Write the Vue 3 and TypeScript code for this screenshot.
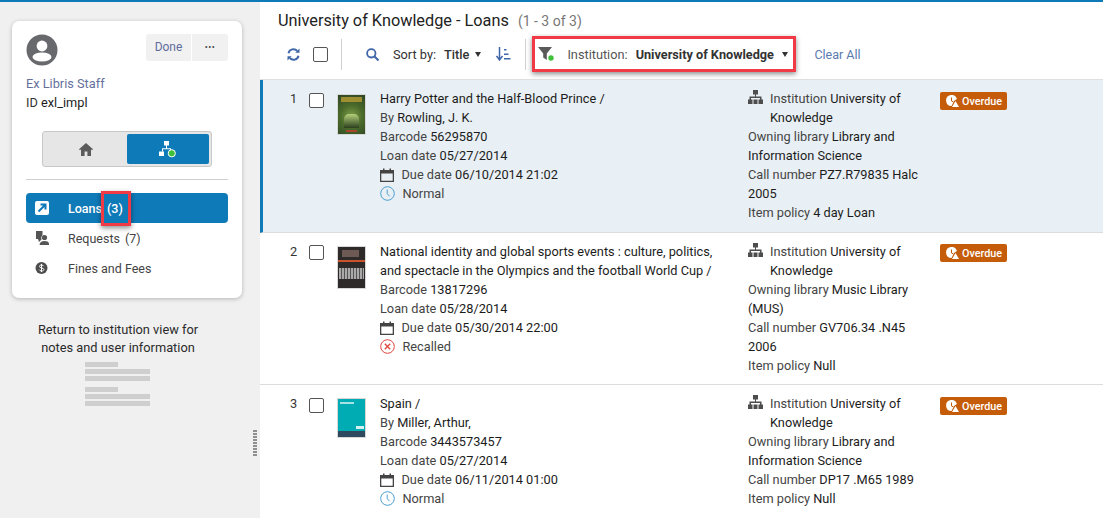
<template>
  <div class="page">
    <aside class="sidebar">
      <section class="card">
        <div class="card__top">
          <svg class="avatar" viewBox="0 0 32 32" aria-hidden="true">
            <circle cx="16" cy="16" r="15.5" fill="#68696d" />
            <circle cx="16" cy="12" r="5.4" fill="#fff" />
            <ellipse cx="16" cy="23" rx="9.5" ry="4.6" fill="#fff" />
          </svg>
          <div class="card__actions">
            <button class="btn btn--done">Done</button>
            <button class="btn btn--more">•••</button>
          </div>
        </div>
        <div class="user-name">Ex Libris Staff</div>
        <div class="user-id">ID <span class="value">exl_impl</span></div>

        <div class="toggle">
          <div class="toggle__item">
            <svg width="14" height="13" viewBox="0 0 14 13" aria-hidden="true">
              <path d="M7 0 0 6.2l1 1 1-.9V13h3.6V8.6h2.8V13H12V6.3l1 .9 1-1z" fill="#5b5b5b" />
            </svg>
          </div>
          <div class="toggle__item toggle__item--on">
            <svg width="18" height="17" viewBox="0 0 18 17" aria-hidden="true">
              <path d="M5 0h5v4.6H8v2.6h4v2h-1v-1H4v2H3V7.2h4V4.6H5zM0 10.500h5V15H0z" fill="#fff" />
              <circle cx="12.800" cy="12.300" r="3.600" fill="#3fbf3a" stroke="#fff" stroke-width="1" />
            </svg>
          </div>
        </div>

        <hr class="divider" />

        <nav class="nav">
          <div class="nav__item nav__item--on">
            <svg class="nav__icon" width="14" height="14" viewBox="0 0 14 14" aria-hidden="true">
              <rect width="14" height="14" rx="2" fill="#fff" />
              <path d="M3.500 10.500 9.500 4.500M5.500 3.500h5v5" fill="none" stroke="#0f7ab8" stroke-width="2" />
            </svg>
            <span>Loans</span>
            <span class="nav__count">(3)</span>
            <span class="mark mark--count"></span>
          </div>
          <div class="nav__item">
            <svg class="nav__icon" width="14" height="14" viewBox="0 0 14 14" aria-hidden="true">
              <path d="M1 0h6.500v4.200a3.600 3.600 0 0 0-1 4.300L4 11 3 8H1z" fill="#555" />
              <circle cx="9.500" cy="6.500" r="2.600" fill="#555" />
              <path d="M4.500 14c.2-2.800 2-4 5-4s4.600 1.200 4.800 4z" fill="#555" />
            </svg>
            <span>Requests</span>
            <span class="nav__count">(7)</span>
          </div>
          <div class="nav__item">
            <svg class="nav__icon" width="14" height="14" viewBox="0 0 14 14" aria-hidden="true">
              <circle cx="6.500" cy="7" r="6" fill="#4d4d4d" />
              <path d="M8.700 5.200C8.300 4.400 7.500 4 6.500 4c-1.200 0-2 .6-2 1.500 0 2 4.400 1 4.400 3 0 .9-1 1.500-2.300 1.500-1.100 0-2-.5-2.300-1.300M6.500 2.900v8.200" fill="none" stroke="#fff" stroke-width="1" />
            </svg>
            <span>Fines and Fees</span>
          </div>
        </nav>
      </section>

      <p class="hint">Return to institution view for<br />notes and user information</p>
      <div class="skeleton">
        <i class="short"></i><i></i><i></i>
        <i class="short gap"></i><i></i><i></i>
      </div>
      <div class="grip"></div>
    </aside>

    <main class="main">
      <h1 class="title">University of Knowledge - Loans <small>(1 - 3 of 3)</small></h1>

      <div class="toolbar">
        <svg class="tool-refresh" width="13" height="13" viewBox="0 0 13 13" aria-hidden="true">
          <path d="M1.500 5.200A5 5 0 0 1 10.200 3M11.500 7.800A5 5 0 0 1 2.800 10" fill="none" stroke="#3f66a8" stroke-width="2" />
          <path d="M12.500 .6v4.200H8.300zM.5 12.400V8.200h4.200z" fill="#3f66a8" />
        </svg>
        <span class="check check--tool"></span>
        <span class="sep"></span>
        <svg class="tool-search" width="13" height="13" viewBox="0 0 13 13" aria-hidden="true">
          <circle cx="5.300" cy="5.300" r="4.200" fill="none" stroke="#3f66a8" stroke-width="1.800" />
          <path d="m8.500 8.500 4 4" stroke="#3f66a8" stroke-width="2" />
        </svg>
        <span class="sort-label">Sort by:</span>
        <span class="sort-value">Title</span>
        <span class="caret caret--sort"></span>
        <svg class="tool-sort" width="15" height="14" viewBox="0 0 15 14" aria-hidden="true">
          <path d="M3.500 0v12M.5 9l3 4 3-4" fill="none" stroke="#3f66a8" stroke-width="1.500" />
          <path d="M8 2h2.500v1.500H8zM8 6.500h4.500V8H8zM8 11h6.500v1.500H8z" fill="#3f66a8" />
        </svg>
        <span class="sep sep--filter"></span>
        <div class="filter">
          <svg width="17" height="16" viewBox="0 0 17 16" aria-hidden="true">
            <path d="M0 1h14L8.800 7.500V14L5.200 11.500V7.500z" fill="#5a5a5a" />
            <circle cx="13" cy="12" r="2.700" fill="#3fbf3a" />
          </svg>
          <span class="filter__label">Institution:</span>
          <span class="filter__value">University of Knowledge</span>
          <span class="caret"></span>
        </div>
        <a class="clear">Clear All</a>
      </div>

      <div class="list">
        <article v-for="(loan, i) in loans" :key="loan.barcode" class="row" :class="{ 'row--on': i === 0 }">
          <span class="row__num">{{ i + 1 }}</span>
          <span class="check"></span>
          <div class="thumb" :class="'thumb--' + loan.cover">
            <template v-if="loan.cover === 'hp'">
              <i class="hp-title"></i><i class="hp-arch"></i><i class="hp-foot"></i>
            </template>
            <template v-else-if="loan.cover === 'ni'">
              <i class="ni-head"></i><i class="ni-line"></i><i class="ni-photo"></i>
            </template>
            <template v-else>
              <i class="sp-top"></i><i class="sp-mark"></i><i class="sp-foot"></i>
            </template>
          </div>

          <div class="row__info">
            <div class="row__name">{{ loan.title }}</div>
            <div v-if="loan.author">By <span class="value">{{ loan.author }}</span></div>
            <div>Barcode <span class="value">{{ loan.barcode }}</span></div>
            <div>Loan date <span class="value">{{ loan.loanDate }}</span></div>
            <div class="with-icon">
              <svg width="14" height="14" viewBox="0 0 14 14" aria-hidden="true">
                <path d="M0 2h3V.5h1.500V2h5V.5H11V2h3v12H0zM1.300 5.500v7.200h11.400V5.500z" fill="#444" />
              </svg>
              <span>Due date <span class="value">{{ loan.dueDate }}</span></span>
            </div>
            <div class="with-icon">
              <svg v-if="loan.status === 'Normal'" width="15" height="15" viewBox="0 0 15 15" aria-hidden="true">
                <circle cx="7.500" cy="7.500" r="6.800" fill="none" stroke="#4a9ed0" stroke-width="1" />
                <path d="M7.200 3.500v4.300l2.500 2.500" fill="none" stroke="#4a9ed0" stroke-width="1" />
              </svg>
              <svg v-else width="15" height="15" viewBox="0 0 15 15" aria-hidden="true">
                <circle cx="7.500" cy="7.500" r="6.800" fill="none" stroke="#e0443e" stroke-width="1" />
                <path d="m4.800 4.800 5.400 5.400m0-5.400-5.400 5.400" stroke="#e0443e" stroke-width="1.300" />
              </svg>
              <span>{{ loan.status }}</span>
            </div>
          </div>

          <div class="row__meta">
            <div class="inst">
              <svg width="15" height="14" viewBox="0 0 15 14" aria-hidden="true">
                <path d="M5 0h5v4.500H8V6.500h5.500V9.500H15V14h-4.500V9.500H12V8H3v1.500h1.500V14H0V9.500h1.500V6.500H7V4.500H5zM5.500 9.500h4V14h-4z" fill="#4d4d4d" />
              </svg>
              <span>Institution <span class="value">University of Knowledge</span></span>
            </div>
            <div>Owning library <span class="value">{{ loan.library }}</span></div>
            <div>Call number <span class="value">{{ loan.callNumber }}</span></div>
            <div>Item policy <span class="value">{{ loan.policy }}</span></div>
          </div>

          <div class="badge">
            <svg width="13" height="12" viewBox="0 0 13 12" aria-hidden="true">
              <path d="M10.900 4A5.500 5.500 0 1 0 5.500 11l1.500-3.100 1.300-2.200z" fill="#fff" />
              <path d="M5.500 2.500V6l2 1" fill="none" stroke="#c45c0a" stroke-width="1" />
              <path d="M9.500 6 13 12H6z" fill="#fff" />
            </svg>
            Overdue
          </div>
        </article>
      </div>
    </main>
  </div>
</template>

<script setup lang="ts">
type Loan = {
  title: string;
  author?: string;
  barcode: string;
  loanDate: string;
  dueDate: string;
  status: 'Normal' | 'Recalled';
  library: string;
  callNumber: string;
  policy: string;
  cover: 'hp' | 'ni' | 'sp';
};

const loans: Loan[] = [
  {
    title: 'Harry Potter and the Half-Blood Prince /',
    author: 'Rowling, J. K.',
    barcode: '56295870',
    loanDate: '05/27/2014',
    dueDate: '06/10/2014 21:02',
    status: 'Normal',
    library: 'Library and Information Science',
    callNumber: 'PZ7.R79835 Halc 2005',
    policy: '4 day Loan',
    cover: 'hp',
  },
  {
    title: 'National identity and global sports events : culture, politics, and spectacle in the Olympics and the football World Cup /',
    barcode: '13817296',
    loanDate: '05/28/2014',
    dueDate: '05/30/2014 22:00',
    status: 'Recalled',
    library: 'Music Library (MUS)',
    callNumber: 'GV706.34 .N45 2006',
    policy: 'Null',
    cover: 'ni',
  },
  {
    title: 'Spain /',
    author: 'Miller, Arthur,',
    barcode: '3443573457',
    loanDate: '05/27/2014',
    dueDate: '06/11/2014 01:00',
    status: 'Normal',
    library: 'Library and Information Science',
    callNumber: 'DP17 .M65 1989',
    policy: 'Null',
    cover: 'sp',
  },
];
</script>

<style>
html,
body {
  margin: 0;
  overflow: hidden;
}
</style>

<style scoped>
.page {
  display: flex;
  height: 516px;
  border-top: 2px solid #0f7ab8;
  overflow: hidden;
  font-family: Roboto, "Liberation Sans", sans-serif;
  font-size: 12.750px;
  line-height: 19px;
  color: #444;
}

.value {
  color: #1c1c1c;
}

/* sidebar */
.sidebar {
  position: relative;
  flex: 0 0 260px;
  box-sizing: border-box;
  padding: 19px 18px 0 12px;
  background: #f0f0f0;
}

.card {
  box-sizing: border-box;
  height: 277px;
  padding: 13px 14px 0;
  background: #fff;
  border-radius: 7px;
  box-shadow: 0 1px 4px rgba(0, 0, 0, 0.25);
}

.card__top {
  display: flex;
  justify-content: space-between;
}

.avatar {
  width: 32px;
  height: 32px;
}

.card__actions {
  display: flex;
  gap: 1px;
  height: 27px;
}

.btn {
  border: 0;
  padding: 0;
  background: #f1f1f1;
  font: inherit;
  font-size: 12px;
  color: #5f6c9e;
}

.btn--done {
  width: 45px;
  border-radius: 3px 0 0 3px;
}

.btn--more {
  width: 36px;
  border-radius: 0 3px 3px 0;
  font-size: 9px;
  letter-spacing: 0.5px;
  color: #444;
}

.user-name {
  margin-top: 8px;
  color: #66709c;
}

.user-id {
  color: #333;
}

.toggle {
  display: flex;
  gap: 1px;
  box-sizing: border-box;
  width: 170px;
  height: 36px;
  margin: 19px 0 0 16px;
  padding: 2px;
  background: #e6e6e6;
  border: 1px solid #c8c8c8;
  border-radius: 3px;
}

.toggle__item {
  display: flex;
  flex: 1;
  align-items: center;
  justify-content: center;
  border-radius: 2px;
}

.toggle__item--on {
  flex: 0 0 82px;
  background: #0f7ab8;
}

.divider {
  height: 1px;
  margin: 12px 0 13px;
  border: 0;
  background: #cfcfcf;
}

.nav__item {
  position: relative;
  display: flex;
  align-items: center;
  height: 30px;
  padding-left: 9px;
  border-radius: 4px;
  font-size: 12.500px;
  color: #444;
}

.nav__item--on {
  background: #0f7ab8;
  color: #fff;
  font-weight: 500;
}

.nav__icon {
  flex: none;
  margin-right: 19px;
}

.nav__count {
  margin-left: 5px;
}

.mark {
  position: absolute;
  box-sizing: border-box;
  border: 3px solid #f03a45;
  box-shadow: 0 2px 5px rgba(0, 0, 0, 0.45);
}

.mark--count {
  left: 75px;
  top: -2px;
  width: 30px;
  height: 35px;
}

.hint {
  margin: 23px 18px 0 0;
  font-size: 12.800px;
  line-height: 18px;
  text-align: center;
  color: #2b2b2b;
}

.skeleton {
  display: flex;
  flex-direction: column;
  gap: 2.500px;
  width: 65px;
  margin: 5px 0 0 73px;
}

.skeleton i {
  display: block;
  height: 4.500px;
  background: #cfcfcf;
}

.skeleton .short {
  width: 33px;
}

.skeleton .gap {
  margin-top: 4px;
}

.grip {
  position: absolute;
  left: 253px;
  top: 428px;
  width: 4px;
  height: 27px;
  background: repeating-linear-gradient(to bottom, #8f8f8f 0 2px, transparent 2px 3px);
}

/* main */
.main {
  flex: 1;
  min-width: 0;
  background: #fff;
}

.title {
  height: 19px;
  margin: 0;
  padding: 9px 0 0 18px;
  font-size: 16.300px;
  font-weight: 400;
  line-height: 19px;
  color: #222;
}

.title small {
  margin-left: 5px;
  font-size: 14px;
  color: #777;
}

.toolbar {
  display: flex;
  align-items: center;
  height: 38px;
  margin-top: 5px;
  padding: 0 0 6px 27px;
  border-bottom: 1px solid #dfdfdf;
}

.check {
  flex: none;
  box-sizing: border-box;
  width: 15px;
  height: 15px;
  border: 1px solid #555;
  border-radius: 2px;
  background: #fff;
}

.check--tool {
  margin-left: 13px;
}

.sep {
  flex: none;
  width: 1px;
  height: 31px;
  margin-left: 13px;
  background: #cfcfcf;
}

.tool-search {
  margin-left: 24px;
}

.sort-label {
  margin-left: 14px;
  color: #333;
}

.sort-value {
  margin-left: 8px;
  font-weight: 500;
  color: #333;
}

.caret {
  flex: none;
  width: 0;
  height: 0;
  border-left: 3.500px solid transparent;
  border-right: 3.500px solid transparent;
  border-top: 5px solid #333;
}

.caret--sort {
  margin-left: 6px;
}

.tool-sort {
  margin-left: 15px;
}

.sep--filter {
  margin-left: 14px;
}

.filter {
  display: flex;
  align-items: center;
  box-sizing: border-box;
  width: 264px;
  height: 36px;
  margin-left: 6px;
  padding-left: 3px;
  border: 3px solid #f03a45;
  box-shadow: 0 2px 5px rgba(0, 0, 0, 0.45);
}

.filter__label {
  margin-left: 12px;
  color: #555;
}

.filter__value {
  margin-left: 8px;
  font-weight: 700;
  color: #333;
  font-size: 12.700px;
}

.filter .caret {
  margin-left: 8px;
}

.clear {
  margin-left: 18px;
  font-size: 12.500px;
  color: #5a7ab0;
}

.row {
  display: flex;
  align-items: flex-start;
  box-sizing: border-box;
  height: 152px;
  padding: 9px 0 0 30px;
  border-bottom: 1px solid #dcdcdc;
}

.row--on {
  height: 153px;
  padding-left: 27px;
  border-left: 3px solid #0f7ab8;
  background: #e9f0f5;
}

.row__num {
  flex: none;
  width: 19px;
  color: #333;
}

.row .check {
  margin-top: 4px;
}

.row:nth-child(2) .check {
  margin-top: 3px;
}

.thumb {
  position: relative;
  flex: none;
  box-sizing: border-box;
  width: 29px;
  margin: 4px 14px 0 13px;
  overflow: hidden;
  border: 1px solid #d8d8d8;
}

.thumb i {
  position: absolute;
  display: block;
}

.thumb--hp {
  height: 41px;
  margin-top: 5px;
  background: radial-gradient(circle at 50% 55%, #7f9f4a, #4a6a2a 45%, #2c4424);
}

.hp-title {
  left: 3px;
  right: 3px;
  top: 2px;
  height: 5px;
  background: #b79c35;
  opacity: 0.8;
}

.hp-arch {
  left: 6px;
  right: 6px;
  top: 19px;
  height: 14px;
  border-radius: 5px 5px 0 0;
  background: linear-gradient(#b4d07a, #2b3f1d);
}

.hp-foot {
  left: 8px;
  right: 8px;
  bottom: 2px;
  height: 2px;
  background: #a8452c;
}

.thumb--ni {
  height: 43px;
  background: #2e2a29;
}

.ni-head {
  left: 4px;
  right: 6px;
  top: 3px;
  height: 7px;
  background: #8a6f66;
  opacity: 0.7;
}

.ni-line {
  left: 0;
  right: 0;
  top: 13px;
  height: 2px;
  background: #c9542c;
}

.ni-photo {
  left: 1px;
  right: 1px;
  top: 21px;
  height: 11px;
  background: repeating-linear-gradient(to right, #a9a9a9 0 2px, #555 2px 3px);
}

.thumb--sp {
  height: 40px;
  background: #00acb3;
}

.sp-top {
  left: 2px;
  top: 3px;
  width: 14px;
  height: 2px;
  background: #a9e2e4;
}

.sp-mark {
  right: 1px;
  top: 27px;
  width: 8px;
  height: 3px;
  background: #d5f2f2;
}

.sp-foot {
  left: 0;
  right: 0;
  bottom: 0;
  height: 6px;
  background: #2f4a5e;
}

.row__info {
  flex: none;
  width: 368px;
  padding-right: 26px;
  box-sizing: border-box;
}

.row__name {
  color: #1c1c1c;
}

.with-icon {
  display: flex;
  align-items: center;
  gap: 7.500px;
}

.with-icon svg {
  flex: none;
}

.row__meta {
  flex: none;
  width: 192px;
  padding-right: 20px;
  box-sizing: border-box;
}

.inst {
  display: flex;
  gap: 7px;
  align-items: flex-start;
}

.inst svg {
  flex: none;
  margin-top: 1px;
}

.badge {
  display: flex;
  align-items: center;
  gap: 3px;
  height: 18px;
  margin-top: 3px;
  padding: 0 5px 0 6px;
  border-radius: 2px;
  background: #c45c0a;
  color: #fff;
  font-size: 10.800px;
  font-weight: 500;
}

.row:nth-child(2) .badge {
  margin-top: 2px;
}
</style>
